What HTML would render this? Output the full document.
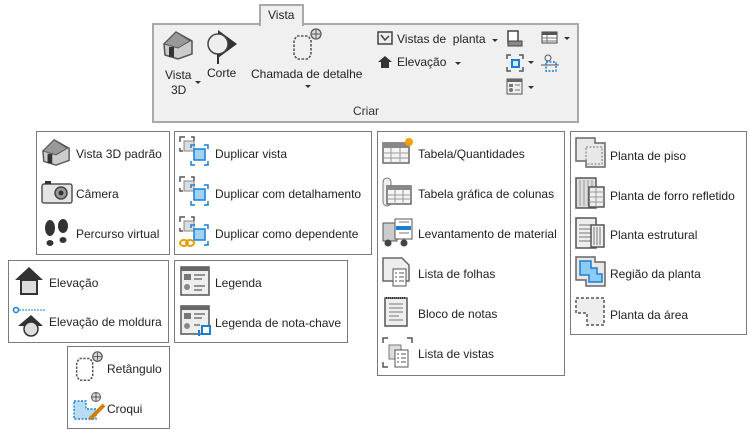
<!DOCTYPE html>
<html><head><meta charset="utf-8"><style>
*{margin:0;padding:0;box-sizing:border-box}
body{width:750px;height:438px;background:#fff;position:relative;overflow:hidden;font-family:"Liberation Sans",sans-serif;font-size:12px;color:#222}
.b{position:absolute;border:1px solid #7a7a7a;background:#fff}
.t{position:absolute;white-space:nowrap;line-height:14px}
svg{position:absolute}
.arr{position:absolute;width:0;height:0;border-left:3px solid transparent;border-right:3px solid transparent;border-top:3px solid #333}
</style></head><body>
<!-- ribbon -->
<div style="position:absolute;left:152px;top:23px;width:427px;height:100px;background:#f0f0f0;border:2px solid #a9a9a9"></div>
<div style="position:absolute;left:259px;top:4px;width:45px;height:22px;background:#f0f0f0;border:2px solid #a9a9a9;border-bottom:none"></div>
<div class="t" style="left:268px;top:8px">Vista</div>
<svg style="left:162px;top:29px" width="32" height="32" viewBox="0 0 32 32"><path d="M2 15 L14 3 L30 12 L30 25 L16 30 L3 26Z" fill="#ccc" stroke="#555" stroke-width="1.5"/><path d="M2 15 L14 3 L28 12 L16 19Z" fill="#999" stroke="#555"/><rect x="7" y="18" width="5" height="10" fill="#333"/></svg>
<div class="t" style="left:165px;top:68px">Vista</div><div class="t" style="left:171px;top:83px">3D</div><div class="arr" style="left:195px;top:81px"></div>
<svg style="left:206px;top:28px" width="34" height="36" viewBox="0 0 34 36"><path d="M12 2 L31 16 L12 30Z" fill="#333"/><circle cx="12" cy="16" r="10" fill="#eee" stroke="#444" stroke-width="1.5"/><line x1="12" y1="26" x2="12" y2="36" stroke="#333" stroke-width="2"/></svg>
<div class="t" style="left:207px;top:66px">Corte</div>
<svg style="left:288px;top:28px" width="36" height="34" viewBox="0 0 36 34"><path d="M9 8 L20 8 L23 12 L23 27 L20 31 L9 31 L6 27 L6 12Z" fill="none" stroke="#555" stroke-dasharray="2.5 1.5" stroke-width="1.6"/><circle cx="28" cy="6" r="5" fill="#ddd" stroke="#555" stroke-width="1.3"/><path d="M28 2V10M24 6H32" stroke="#555"/></svg>
<div class="t" style="left:251px;top:67px">Chamada de detalhe</div><div class="arr" style="left:305px;top:85px"></div>
<svg style="left:377px;top:31px" width="16" height="14" viewBox="0 0 16 14"><rect x="1" y="1" width="14" height="12" fill="#eee" stroke="#444" stroke-width="1.5"/><path d="M4 4 L8 9 L12 5" fill="none" stroke="#444" stroke-width="1.5"/></svg>
<div class="t" style="left:397px;top:32px">Vistas de&nbsp; planta</div><div class="arr" style="left:492px;top:39px"></div>
<svg style="left:377px;top:55px" width="16" height="14" viewBox="0 0 16 14"><path d="M1 7 L8 1 L15 7 L12 7 L12 13 L4 13 L4 7Z" fill="#333"/></svg>
<div class="t" style="left:397px;top:55px">Elevação</div><div class="arr" style="left:455px;top:62px"></div>
<svg style="left:506px;top:30px" width="18" height="18" viewBox="0 0 18 18"><rect x="2" y="1" width="10" height="12" fill="#fff" stroke="#444" stroke-width="1.5"/><rect x="2" y="11" width="14" height="5" fill="#888" stroke="#444"/></svg>
<svg style="left:541px;top:31px" width="18" height="14" viewBox="0 0 18 14"><rect x="1" y="1" width="15" height="11" fill="#fff" stroke="#444"/><rect x="1" y="1" width="15" height="3" fill="#555"/><path d="M1 7H16M1 10H16M6 4V12" stroke="#777"/></svg><div class="arr" style="left:564px;top:37px"></div>
<svg style="left:506px;top:54px" width="18" height="18" viewBox="0 0 18 18"><path d="M1 5V1H5M13 1H17V5M1 13V17H5M13 17H17V13" fill="none" stroke="#555" stroke-width="1.5"/><rect x="6" y="6" width="7" height="7" fill="#cfe8fb" stroke="#1a7fd4" stroke-width="2"/></svg><div class="arr" style="left:528px;top:61px"></div>
<svg style="left:540px;top:54px" width="20" height="18" viewBox="0 0 20 18"><circle cx="8" cy="4" r="3" fill="none" stroke="#555"/><path d="M1 11H19" stroke="#555"/><rect x="6" y="8" width="10" height="9" fill="none" stroke="#1a7fd4" stroke-dasharray="2 1.5" stroke-width="1.5"/></svg>
<svg style="left:506px;top:78px" width="18" height="18" viewBox="0 0 18 18"><rect x="1" y="1" width="15" height="15" fill="#eee" stroke="#555"/><rect x="1" y="1" width="15" height="3" fill="#666"/><rect x="3" y="6" width="4" height="3" fill="#777"/><circle cx="5" cy="12" r="2" fill="#777"/><path d="M9 7H14M9 12H14" stroke="#777"/></svg><div class="arr" style="left:528px;top:86px"></div>
<div class="t" style="left:353px;top:104px;color:#333">Criar</div>

<!-- boxes -->
<div class="b" style="left:36px;top:131px;width:134px;height:124px"></div>
<div class="b" style="left:174px;top:131px;width:198px;height:124px"></div>
<div class="b" style="left:8px;top:260px;width:161px;height:83px"></div>
<div class="b" style="left:174px;top:260px;width:174px;height:83px"></div>
<div class="b" style="left:67px;top:346px;width:103px;height:83px"></div>
<div class="b" style="left:377px;top:131px;width:188px;height:245px"></div>
<div class="b" style="left:570px;top:131px;width:177px;height:204px"></div>

<!-- A -->
<svg style="left:41px;top:137px" width="30" height="30" viewBox="0 0 32 32"><path d="M2 15 L14 3 L30 12 L30 25 L16 30 L3 26Z" fill="#ccc" stroke="#555" stroke-width="1.5"/><path d="M2 15 L14 3 L28 12 L16 19Z" fill="#999" stroke="#555"/><rect x="7" y="18" width="5" height="10" fill="#333"/></svg>
<div class="t" style="left:76px;top:147px">Vista 3D padrão</div>
<svg style="left:41px;top:180px" width="32" height="24" viewBox="0 0 32 24"><rect x="1" y="4" width="30" height="19" rx="2" fill="#e4e4e4" stroke="#555" stroke-width="1.5"/><rect x="4" y="1" width="6" height="3" fill="#333"/><circle cx="20" cy="13" r="6" fill="#999" stroke="#444" stroke-width="1.5"/><circle cx="20" cy="13" r="2.5" fill="#333"/></svg>
<div class="t" style="left:76px;top:187px">Câmera</div>
<svg style="left:44px;top:219px" width="26" height="28" viewBox="0 0 26 28"><ellipse cx="6" cy="9" rx="5" ry="8" fill="#333"/><ellipse cx="6" cy="24" rx="3.5" ry="3" fill="#333"/><ellipse cx="19" cy="7" rx="5" ry="7" fill="#333"/><ellipse cx="19" cy="21" rx="3.5" ry="3" fill="#333"/></svg>
<div class="t" style="left:76px;top:227px">Percurso virtual</div>
<!-- B -->
<svg style="left:179px;top:136px" width="34" height="34" viewBox="0 0 34 34"><path d="M1 6V1H6M12 1H15V5M1 12V15H4" fill="none" stroke="#555" stroke-width="1.5"/><rect x="5" y="5" width="10" height="10" fill="#ddd" stroke="#888"/><path d="M12 12V9H16M25 9H29V13M12 25V29H16M25 29H29V25" fill="none" stroke="#1a7fd4" stroke-width="1.5"/><rect x="15" y="13" width="11" height="11" fill="#9fd3f5" stroke="#1a7fd4" stroke-width="1.5"/></svg>
<div class="t" style="left:215px;top:147px">Duplicar vista</div>
<svg style="left:179px;top:176px" width="34" height="34" viewBox="0 0 34 34"><path d="M1 6V1H6M12 1H15V5M1 12V15H4" fill="none" stroke="#555" stroke-width="1.5"/><rect x="5" y="5" width="10" height="10" fill="#ddd" stroke="#888"/><path d="M12 12V9H16M25 9H29V13M12 25V29H16M25 29H29V25" fill="none" stroke="#1a7fd4" stroke-width="1.5"/><rect x="15" y="13" width="11" height="11" fill="#9fd3f5" stroke="#1a7fd4" stroke-width="1.5"/></svg>
<div class="t" style="left:215px;top:187px">Duplicar com detalhamento</div>
<svg style="left:179px;top:216px" width="34" height="34" viewBox="0 0 34 34"><path d="M1 6V1H6M12 1H15V5M1 12V15H4" fill="none" stroke="#555" stroke-width="1.5"/><rect x="5" y="5" width="10" height="10" fill="#ddd" stroke="#888"/><path d="M12 12V9H16M25 9H29V13M25 29H29V25" fill="none" stroke="#1a7fd4" stroke-width="1.5"/><rect x="15" y="13" width="11" height="11" fill="#9fd3f5" stroke="#1a7fd4" stroke-width="1.5"/><ellipse cx="5" cy="27" rx="4" ry="3" fill="none" stroke="#e0a000" stroke-width="2"/><ellipse cx="11" cy="27" rx="4" ry="3" fill="none" stroke="#e0a000" stroke-width="2"/></svg>
<div class="t" style="left:215px;top:227px">Duplicar como dependente</div>
<!-- C -->
<svg style="left:14px;top:266px" width="30" height="30" viewBox="0 0 30 30"><path d="M1 14 L15 1 L29 14 L24 14 L24 29 L6 29 L6 14Z" fill="#333"/><rect x="8" y="15" width="14" height="12" fill="#ddd"/></svg>
<div class="t" style="left:49px;top:276px">Elevação</div>
<svg style="left:12px;top:306px" width="34" height="32" viewBox="0 0 34 32"><circle cx="4" cy="4" r="2.5" fill="#fff" stroke="#1a7fd4" stroke-width="1.5"/><path d="M7 4H34" stroke="#1a7fd4" stroke-dasharray="2 1"/><path d="M6 20 L19 9 L31 20Z" fill="#333"/><circle cx="19" cy="23" r="7" fill="#ddd" stroke="#333" stroke-width="1.5"/></svg>
<div class="t" style="left:49px;top:315px">Elevação de moldura</div>
<!-- D -->
<svg style="left:180px;top:266px" width="30" height="30" viewBox="0 0 30 30"><rect x="1" y="1" width="28" height="28" fill="#eee" stroke="#555" stroke-width="1.5"/><rect x="1" y="1" width="28" height="4" fill="#666"/><rect x="4" y="8" width="7" height="6" fill="#777"/><circle cx="7" cy="21" r="3" fill="#888"/><path d="M14 9H25M14 13H22M14 20H25M14 24H22" stroke="#777" stroke-width="1.5"/></svg>
<div class="t" style="left:215px;top:276px">Legenda</div>
<svg style="left:180px;top:305px" width="32" height="32" viewBox="0 0 32 32"><rect x="1" y="1" width="28" height="28" fill="#eee" stroke="#555" stroke-width="1.5"/><rect x="1" y="1" width="28" height="4" fill="#666"/><rect x="4" y="8" width="7" height="6" fill="#777"/><circle cx="7" cy="21" r="3" fill="#888"/><path d="M14 9H25M14 13H22M14 20H20" stroke="#777" stroke-width="1.5"/><rect x="22" y="21" width="8" height="8" fill="#fff" stroke="#1a7fd4" stroke-width="2"/><path d="M19 25V31" stroke="#1a7fd4" stroke-width="2"/></svg>
<div class="t" style="left:215px;top:316px">Legenda de nota-chave</div>
<!-- E -->
<svg style="left:71px;top:350px" width="34" height="34" viewBox="0 0 36 34"><path d="M9 8 L20 8 L23 12 L23 27 L20 31 L9 31 L6 27 L6 12Z" fill="none" stroke="#555" stroke-dasharray="2.5 1.5" stroke-width="1.6"/><circle cx="28" cy="6" r="5" fill="#ddd" stroke="#555" stroke-width="1.3"/><path d="M28 2V10M24 6H32" stroke="#555"/></svg>
<div class="t" style="left:107px;top:362px">Retângulo</div>
<svg style="left:72px;top:391px" width="34" height="32" viewBox="0 0 34 32"><circle cx="24" cy="6" r="4.5" fill="#ddd" stroke="#555"/><path d="M24 2V10M20 6H28" stroke="#555"/><path d="M2 10H14V18H24V28H2Z" fill="#b8dcf5" stroke="#1a7fd4" stroke-dasharray="2 1.5" stroke-width="1.4"/><path d="M18 28 L32 14" stroke="#d08000" stroke-width="4"/></svg>
<div class="t" style="left:107px;top:402px">Croqui</div>
<!-- F -->
<svg style="left:382px;top:137px" width="32" height="28" viewBox="0 0 32 28"><rect x="1" y="6" width="26" height="20" fill="#f4f4f4" stroke="#666" stroke-width="1.5"/><rect x="1" y="6" width="26" height="5" fill="#888"/><path d="M1 16H27M1 21H27M9 11V26M18 11V26" stroke="#999"/><circle cx="27" cy="5" r="4" fill="#f5a000"/></svg>
<div class="t" style="left:418px;top:147px">Tabela/Quantidades</div>
<svg style="left:382px;top:177px" width="32" height="30" viewBox="0 0 32 30"><rect x="1" y="1" width="8" height="28" rx="4" fill="#eee" stroke="#777"/><rect x="5" y="9" width="24" height="18" fill="#f4f4f4" stroke="#666" stroke-width="1.5"/><rect x="5" y="9" width="24" height="4" fill="#888"/><path d="M5 18H29M5 22H29M13 13V27M21 13V27" stroke="#999"/></svg>
<div class="t" style="left:418px;top:187px">Tabela gráfica de colunas</div>
<svg style="left:382px;top:217px" width="32" height="30" viewBox="0 0 32 30"><rect x="1" y="6" width="14" height="18" fill="#ccc" stroke="#555"/><rect x="13" y="2" width="17" height="20" fill="#fff" stroke="#555"/><rect x="14" y="9" width="15" height="4" fill="#1a7fd4"/><path d="M17 5H27M17 16H27" stroke="#777"/><circle cx="6" cy="26" r="3.5" fill="#444"/><circle cx="22" cy="26" r="3.5" fill="#444"/></svg>
<div class="t" style="left:418px;top:227px">Levantamento de material</div>
<svg style="left:382px;top:257px" width="32" height="30" viewBox="0 0 32 30"><path d="M1 1H20L27 8V24H1Z" fill="#eee" stroke="#666" stroke-width="1.5"/><rect x="11" y="12" width="13" height="17" fill="#fff" stroke="#555"/><path d="M13 16H15M17 16H22M13 20H15M17 20H22M13 24H15M17 24H22" stroke="#555"/></svg>
<div class="t" style="left:418px;top:267px">Lista de folhas</div>
<svg style="left:384px;top:296px" width="26" height="32" viewBox="0 0 26 32"><rect x="1" y="2" width="22" height="28" fill="#eee" stroke="#555" stroke-width="1.5"/><path d="M2 2H22" stroke="#333" stroke-width="2" stroke-dasharray="1 1"/><path d="M5 8H19M5 12H19M5 16H19M5 20H15M5 24H19" stroke="#777"/></svg>
<div class="t" style="left:418px;top:307px">Bloco de notas</div>
<svg style="left:382px;top:337px" width="32" height="32" viewBox="0 0 32 32"><path d="M1 6V1H6M25 1H30V6M1 25V30H6" fill="none" stroke="#555" stroke-width="1.5"/><rect x="7" y="8" width="12" height="14" fill="#ddd" stroke="#777"/><rect x="13" y="13" width="13" height="17" fill="#fff" stroke="#555"/><path d="M15 17H17M19 17H24M15 21H17M19 21H24M15 25H17M19 25H24" stroke="#555"/></svg>
<div class="t" style="left:418px;top:347px">Lista de vistas</div>
<!-- G -->
<svg style="left:575px;top:137px" width="32" height="32" viewBox="0 0 32 32"><path d="M1 1H20V6H30V30H11V24H1Z" fill="#e8e8e8" stroke="#666" stroke-width="1.5"/><rect x="11" y="10" width="16" height="17" fill="none" stroke="#777" stroke-dasharray="2 1.5"/></svg>
<div class="t" style="left:610px;top:149px">Planta de piso</div>
<svg style="left:575px;top:177px" width="32" height="32" viewBox="0 0 32 32"><rect x="1" y="1" width="20" height="30" fill="#ddd" stroke="#555" stroke-width="1.5"/><path d="M5 3V29M9 3V29M13 3V29M17 3V29" stroke="#999"/><rect x="14" y="10" width="15" height="20" fill="#eee" stroke="#555" stroke-width="1.5"/><path d="M14 15H29M14 20H29M14 25H29M21 10V30" stroke="#999"/></svg>
<div class="t" style="left:610px;top:189px">Planta de forro refletido</div>
<svg style="left:575px;top:217px" width="32" height="32" viewBox="0 0 32 32"><rect x="1" y="1" width="20" height="30" fill="#eee" stroke="#555" stroke-width="1.5"/><path d="M4 8H18M4 12H18M4 16H18M4 20H18M4 24H18" stroke="#777"/><rect x="16" y="8" width="13" height="22" fill="#eee" stroke="#555" stroke-width="1.5"/><path d="M19 10V28M22 10V28M25 10V28" stroke="#777"/></svg>
<div class="t" style="left:610px;top:228px">Planta estrutural</div>
<svg style="left:575px;top:256px" width="32" height="32" viewBox="0 0 32 32"><path d="M1 1H20V6H30V30H11V24H1Z" fill="#e8e8e8" stroke="#666" stroke-width="1.5"/><path d="M5 5H16V12H22V18H27V26H14V19H5Z" fill="#8ecbf2" stroke="#1a7fd4" stroke-width="1.5"/></svg>
<div class="t" style="left:610px;top:267px">Região da planta</div>
<svg style="left:575px;top:297px" width="32" height="30" viewBox="0 0 32 30"><path d="M1 1H29V28H12V16H1Z" fill="#eee" stroke="#555" stroke-width="1.5" stroke-dasharray="3 2"/></svg>
<div class="t" style="left:610px;top:308px">Planta da área</div>
</body></html>
